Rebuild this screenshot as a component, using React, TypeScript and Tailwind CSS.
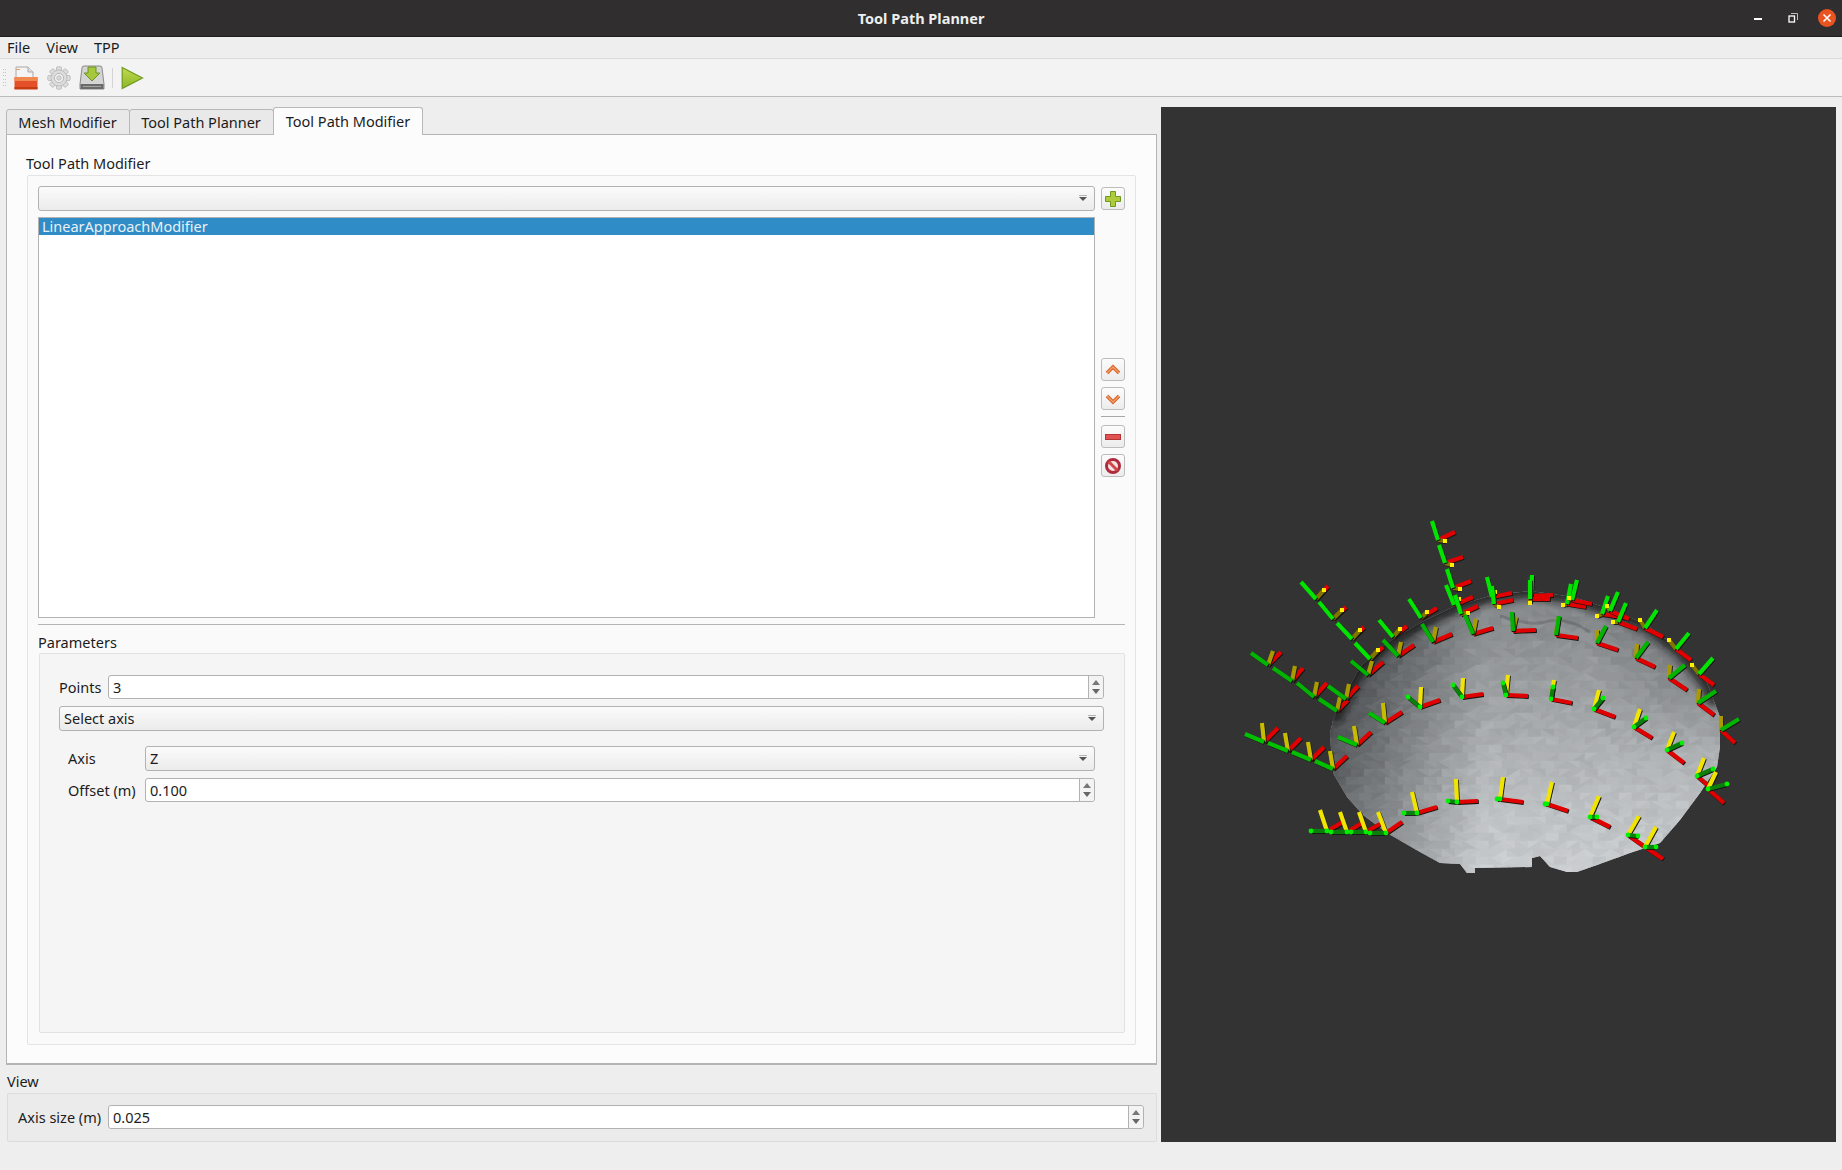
import React from "react";

const uiFont = "font-['Noto_Sans',sans-serif]";

// dome outline in window coordinates
const DOME =
  "1333,720 1345,695 1360,667 1387,643 1420,623 1453,607 1493,595 1530,591 1573,597 1613,610 1647,625 1680,650 1707,683 1720,717 1720,747 1717,767 1700,793 1680,820 1660,843 1630,853 1597,865 1577,872 1567,872 1550,867 1540,856 1532,858 1532,867 1475,868 1475,873 1467,873 1460,864 1440,863 1420,852 1387,833 1363,815 1347,797 1333,773 1331,750 1330,733";

const noise = (x: number, y: number) => {
  const s = Math.sin(x * 12.9898 + y * 78.233) * 43758.5453;
  return s - Math.floor(s) - 0.5;
};

function shade(x: number, y: number) {
  const dx = (x - 1525) / 212;
  const dy = (y - 800) / 212;
  const rim = Math.min(1, Math.sqrt(dx * dx + dy * dy));
  let v = dy < 0 ? 188 + 60 * dy : 188 + 40 * dy;
  if (dx < -0.2) v -= (-dx - 0.2) * 125;
  if (dx > 0.3 && dy < -0.2) v -= (dx - 0.3) * (-dy - 0.2) * 130;
  // latitude stripes of the scan
  v += Math.sin(rim * 70) * 3;
  return v + noise(Math.round(x), Math.round(y)) * 11;
}

function buildFacets() {
  const out: { d: string; c: string }[] = [];
  const w = 13;
  const h = 8;
  for (let j = 0; j < 38; j++) {
    for (let i = 0; i < 33; i++) {
      const x = 1320 + i * w + (j % 2) * 5;
      const y = 585 + j * h;
      const flip = noise(i, j) > 0;
      const tris = flip
        ? [
            [x, y, x + w, y, x, y + h],
            [x + w, y, x + w, y + h, x, y + h],
          ]
        : [
            [x, y, x + w, y, x + w, y + h],
            [x, y, x + w, y + h, x, y + h],
          ];
      for (const t of tris) {
        const v = Math.max(26, Math.min(208, shade((t[0] + t[2] + t[4]) / 3, (t[1] + t[3] + t[5]) / 3)));
        const r = Math.round(v);
        out.push({
          d: `M${t[0]} ${t[1]}L${t[2]} ${t[3]}L${t[4]} ${t[5]}Z`,
          c: `rgb(${r},${r + 3},${r + 5})`,
        });
      }
    }
  }
  return out;
}

// origin, green tip, yellow tip, red tip, tone
type Triad = [number, number, number, number, number, number, number, number, number];
const TRIADS: Triad[] = [
  [1438, 540, 1432, 521, 1445, 541, 1455, 532, 0],
  [1445, 563, 1439, 545, 1452, 565, 1463, 557, 0],
  [1453, 588, 1447, 569, 1460, 589, 1471, 581, 0],
  [1454, 605, 1446, 585, 1459, 599, 1473, 597, 0],
  [1461, 614, 1455, 595, 1468, 613, 1478, 606, 0],
  [1316, 599, 1301, 582, 1324, 590, 1328, 586, 0],
  [1333, 619, 1319, 602, 1342, 610, 1346, 607, 0],
  [1352, 639, 1337, 623, 1360, 630, 1364, 627, 0],
  [1370, 659, 1355, 643, 1378, 650, 1383, 647, 0],
  [1393, 637, 1379, 620, 1400, 629, 1407, 626, 0],
  [1421, 618, 1409, 599, 1427, 612, 1437, 608, 0],
  [1492, 597, 1487, 577, 1495, 592, 1512, 593, 0],
  [1494, 604, 1492, 586, 1499, 607, 1513, 600, 0],
  [1531, 596, 1532, 575, 1530, 603, 1553, 595, 0],
  [1530, 599, 1530, 580, 1530, 603, 1550, 599, 0],
  [1567, 604, 1571, 584, 1563, 605, 1586, 607, 0],
  [1572, 600, 1577, 580, 1569, 598, 1592, 604, 0],
  [1602, 614, 1608, 596, 1597, 616, 1628, 618, 0],
  [1610, 611, 1618, 592, 1607, 606, 1629, 619, 0],
  [1618, 622, 1626, 603, 1613, 622, 1637, 629, 0],
  [1645, 628, 1657, 610, 1640, 620, 1663, 637, 0],
  [1676, 649, 1689, 633, 1669, 640, 1691, 660, 0],
  [1699, 674, 1713, 658, 1692, 665, 1714, 685, 0],
  [1268, 665, 1251, 653, 1273, 651, 1281, 652, 1],
  [1292, 681, 1273, 668, 1295, 666, 1303, 668, 1],
  [1314, 697, 1297, 683, 1317, 682, 1327, 683, 1],
  [1337, 711, 1319, 699, 1340, 697, 1348, 700, 1],
  [1346, 699, 1328, 686, 1349, 684, 1358, 686, 1],
  [1368, 675, 1351, 661, 1372, 661, 1383, 662, 1],
  [1398, 656, 1383, 640, 1401, 642, 1414, 645, 1],
  [1433, 642, 1422, 624, 1436, 627, 1452, 634, 1],
  [1473, 634, 1465, 615, 1476, 619, 1493, 628, 1],
  [1513, 631, 1512, 612, 1516, 617, 1536, 630, 1],
  [1556, 635, 1559, 616, 1558, 618, 1578, 638, 1],
  [1597, 643, 1606, 626, 1597, 630, 1618, 650, 1],
  [1636, 658, 1648, 642, 1637, 644, 1655, 667, 1],
  [1669, 678, 1685, 665, 1670, 665, 1687, 690, 1],
  [1698, 703, 1716, 691, 1699, 689, 1714, 715, 1],
  [1721, 730, 1739, 719, 1721, 716, 1735, 743, 1],
  [1264, 742, 1245, 734, 1262, 723, 1278, 728, 3],
  [1288, 751, 1268, 743, 1285, 733, 1301, 738, 3],
  [1311, 760, 1292, 752, 1308, 742, 1324, 747, 3],
  [1333, 769, 1315, 761, 1330, 751, 1347, 756, 3],
  [1357, 745, 1338, 737, 1354, 726, 1371, 732, 3],
  [1385, 723, 1369, 713, 1383, 703, 1402, 712, 3],
  [1420, 707, 1408, 697, 1421, 687, 1440, 700, 2],
  [1462, 697, 1453, 685, 1463, 678, 1483, 694, 2],
  [1506, 695, 1503, 683, 1508, 675, 1528, 696, 2],
  [1551, 699, 1553, 687, 1554, 680, 1572, 703, 2],
  [1594, 709, 1603, 698, 1599, 690, 1615, 717, 2],
  [1634, 727, 1646, 718, 1640, 709, 1652, 738, 2],
  [1667, 750, 1682, 743, 1674, 732, 1684, 763, 2],
  [1697, 776, 1713, 769, 1704, 758, 1710, 787, 2],
  [1708, 789, 1727, 784, 1716, 772, 1724, 803, 2],
  [1327, 831, 1311, 831, 1320, 810, 1343, 822, 2],
  [1347, 832, 1331, 832, 1340, 812, 1362, 823, 2],
  [1366, 832, 1351, 832, 1359, 812, 1380, 824, 2],
  [1386, 833, 1370, 833, 1378, 812, 1402, 822, 2],
  [1417, 813, 1404, 813, 1412, 792, 1437, 807, 2],
  [1457, 802, 1448, 801, 1456, 779, 1478, 801, 2],
  [1500, 799, 1497, 799, 1503, 777, 1523, 802, 2],
  [1547, 804, 1545, 804, 1552, 782, 1568, 811, 2],
  [1590, 817, 1597, 817, 1599, 796, 1610, 827, 2],
  [1628, 835, 1638, 836, 1639, 816, 1645, 847, 2],
  [1645, 847, 1656, 847, 1656, 827, 1663, 859, 2],
];

const GREEN = ["#00e400", "#02b402", "#0a7f0a", "#00c000"];
const YELLOW = ["#7f7600", "#a89a00", "#f0e400", "#c9bc00"];

function Axis({ x1, y1, x2, y2, color }: { x1: number; y1: number; x2: number; y2: number; color: string }) {
  return (
    <>
      <line x1={x1 + 0.8} y1={y1 + 0.8} x2={x2 + 0.8} y2={y2 + 0.8} stroke="#111" strokeWidth="4.2" />
      <line x1={x1} y1={y1} x2={x2} y2={y2} stroke={color} strokeWidth="4.2" />
    </>
  );
}

function MeshView() {
  const facets = React.useMemo(buildFacets, []);
  return (
    <svg viewBox="1161 107 675 1035" className="block h-full w-full">
      <defs>
        <clipPath id="dome">
          <polygon points={DOME} />
        </clipPath>
        <filter id="soft" x="-10%" y="-30%" width="120%" height="160%">
          <feGaussianBlur stdDeviation="4" />
        </filter>
      </defs>
      <g clipPath="url(#dome)">
        <rect x="1320" y="580" width="440" height="310" fill="#a0a4a6" />
        {facets.map((f, i) => (
          <path key={i} d={f.d} fill={f.c} stroke={f.c} strokeWidth="0.6" />
        ))}
        {/* dark far rim */}
        <polyline
          points="1333,720 1345,695 1360,667 1387,643 1420,623 1453,607 1493,595 1530,591 1573,597 1613,610 1647,625 1680,650 1707,683 1716,705"
          fill="none"
          stroke="#161616"
          strokeWidth="14"
          opacity="0.85"
          filter="url(#soft)"
        />
        <path d="M1500 616 Q1530 626 1545 622 Q1565 616 1590 632" fill="none" stroke="#4a4c4e" strokeWidth="3" opacity="0.3" />
      </g>
      {TRIADS.map((t, i) => (
        <g key={i}>
          <Axis x1={t[0]} y1={t[1]} x2={t[6]} y2={t[7]} color="#e00000" />
          <Axis x1={t[0]} y1={t[1]} x2={t[4]} y2={t[5]} color={YELLOW[t[8]]} />
          <Axis x1={t[0]} y1={t[1]} x2={t[2]} y2={t[3]} color={GREEN[t[8]]} />
          {t[8] === 0 && <rect x={t[4] - 2} y={t[5] - 2} width="4" height="4" fill="#ffee00" />}
          {t[8] === 2 && (
            <>
              <circle cx={t[0]} cy={t[1]} r="2.4" fill="#00f000" />
              <circle cx={t[2]} cy={t[3]} r="2.4" fill="#00f000" />
            </>
          )}
        </g>
      ))}
    </svg>
  );
}

function DownArrow() {
  return (
    <svg width="10" height="7" viewBox="0 0 10 7">
      <rect x="1" y="0" width="8" height="1" fill="#b5b5b5" />
      <polygon points="1,2 9,2 5,6" fill="#555" />
    </svg>
  );
}

function Combo({ text, className }: { text?: string; className?: string }) {
  return (
    <div
      className={`flex h-[25px] items-center justify-between rounded-[3px] border border-[#b2b2b2] bg-gradient-to-b from-[#fbfbfb] to-[#ebebeb] pl-[4px] pr-[6px] ${className ?? ""}`}
    >
      <span className="-mt-[2px]">{text}</span>
      <DownArrow />
    </div>
  );
}

function Spin({ value, className }: { value: string; className?: string }) {
  return (
    <div className={`flex h-[24px] items-stretch rounded-[3px] border border-[#b2b2b2] bg-white ${className ?? ""}`}>
      <span className="flex flex-1 items-center pl-[4px]">{value}</span>
      <div className="flex w-[15px] flex-col items-center justify-center gap-[4px] rounded-r-[3px] border-l border-[#b2b2b2] bg-[#f3f3f3]">
        <svg width="8" height="5" viewBox="0 0 8 5">
          <polygon points="0,5 8,5 4,0" fill="#777" />
        </svg>
        <svg width="8" height="5" viewBox="0 0 8 5">
          <polygon points="0,0 8,0 4,5" fill="#666" />
        </svg>
      </div>
    </div>
  );
}

function IconButton({ children, className }: { children: React.ReactNode; className?: string }) {
  return (
    <div
      className={`flex h-[23px] w-[24px] items-center justify-center rounded-[3px] border border-[#bcbcbc] bg-gradient-to-b from-[#fcfcfc] to-[#ececec] ${className ?? ""}`}
    >
      {children}
    </div>
  );
}

function Chevron({ up }: { up?: boolean }) {
  const d = up ? "M2 11 L8 5 L14 11" : "M2 5 L8 11 L14 5";
  return (
    <svg width="16" height="16" viewBox="0 0 16 16">
      <path d={d} fill="none" stroke="#d8602a" strokeWidth="3.6" />
      <path d={d} fill="none" stroke="#f2a468" strokeWidth="1.4" />
    </svg>
  );
}

function ToolbarIcons() {
  return (
    <div className="flex h-full items-center">
      <div className="ml-[3px] grid h-[18px] w-[4px] grid-cols-2 content-between">
        {Array.from({ length: 12 }).map((_, i) => (
          <span key={i} className="h-[1px] w-[1px] bg-[#c4c4c4]" />
        ))}
      </div>
      {/* open */}
      <svg width="26" height="26" viewBox="0 0 26 26" className="ml-[6px]">
        <path d="M3 2 H15 L20 7 V20 H3 Z" fill="#f4f4f4" stroke="#a8a8a8" />
        <path d="M15 2 V7 H20" fill="#e2e2e2" stroke="#a8a8a8" />
        <rect x="3" y="4" width="4" height="1" fill="#e8a060" />
        <path d="M1.5 12 H24.5 V24 H1.5 Z" fill="#e4502a" />
        <path d="M1.5 12 H24.5 V16 H1.5 Z" fill="#f08a50" />
        <path d="M1.5 22 H24.5 V24.5 H1.5 Z" fill="#c83c14" />
      </svg>
      {/* settings, disabled look */}
      <svg width="24" height="24" viewBox="0 0 24 24" className="ml-[8px]">
        <g fill="#dcdcdc" stroke="#b8b8b8" strokeWidth="0.8">
          {[0, 45, 90, 135, 180, 225, 270, 315].map((a) => (
            <rect key={a} x="9.5" y="0.8" width="5" height="6" rx="1" transform={`rotate(${a} 12 12)`} />
          ))}
          <circle cx="12" cy="12" r="8" />
        </g>
        <circle cx="12" cy="12" r="4.6" fill="#f2f2f2" stroke="#b8b8b8" />
        <circle cx="12" cy="12" r="2.2" fill="#dadada" stroke="#bebebe" />
      </svg>
      {/* save */}
      <svg width="26" height="26" viewBox="0 0 26 26" className="ml-[8px]">
        <path d="M3 3 Q3 1 5 1 H21 Q23 1 23 3 L25 19 V24 H1 V19 Z" fill="#d4d4d4" stroke="#8a8a8a" />
        <rect x="1.5" y="19" width="23" height="5" fill="#6a6a6a" />
        <rect x="4" y="21" width="18" height="1" fill="#a4a4a4" />
        <path d="M9 2 H17 V8 H21 L13 16 L5 8 H9 Z" fill="#a5c83c" stroke="#6c9422" />
      </svg>
      <div className="ml-[7px] h-[20px] w-[1px] bg-[#d4d4d4]" />
      <svg width="23" height="24" viewBox="0 0 23 24" className="ml-[8px]">
        <defs>
          <linearGradient id="play" x1="0" y1="0" x2="0" y2="1">
            <stop offset="0" stopColor="#c3da4e" />
            <stop offset="1" stopColor="#8cb528" />
          </linearGradient>
        </defs>
        <polygon points="1.2,1.5 21.5,12 1.2,22.5" fill="url(#play)" stroke="#6f9a1e" strokeWidth="1.2" />
      </svg>
    </div>
  );
}

export default function App() {
  return (
    <div className={`flex h-[1170px] w-[1842px] flex-col overflow-hidden bg-[#eeeeee] text-[14.5px] leading-5 text-[#1c1c1c] ${uiFont}`}>
      {/* Title bar */}
      <div className="relative flex h-[37px] shrink-0 items-center justify-center border-b border-[#1e1e1e] bg-[#302e2e]">
        <span className="text-[14.5px] font-bold text-[#eeeeee]">Tool Path Planner</span>
        <div className="absolute right-[6px] top-[9px] flex items-center">
          <span className="mr-[26px] mt-[2px] h-[1px] w-[8px] border-t-2 border-white" />
          <svg width="10" height="10" viewBox="0 0 10 10" className="mr-[20px]">
            <path d="M3 0.5 H9.5 V7" fill="none" stroke="#bbb" />
            <rect x="1" y="3" width="5.5" height="6" fill="none" stroke="#fff" strokeWidth="1.3" />
          </svg>
          <div className="flex h-[18px] w-[18px] items-center justify-center rounded-full bg-[#e95420]">
            <svg width="10" height="10" viewBox="0 0 10 10">
              <path d="M1.5 1.5 L8.5 8.5 M8.5 1.5 L1.5 8.5" stroke="#fff" strokeWidth="1.6" />
            </svg>
          </div>
        </div>
      </div>

      {/* Menu */}
      <div className="flex h-[22px] shrink-0 items-center gap-[16px] border-b border-[#d9d9d9] pb-[2px] pl-[7px]">
        <span>File</span>
        <span>View</span>
        <span>TPP</span>
      </div>

      {/* Toolbar */}
      <div className="h-[38px] shrink-0 border-b border-[#bcbcbc] bg-[#f3f3f3]">
        <ToolbarIcons />
      </div>

      {/* Body */}
      <div className="flex gap-[4px] pl-[6px] pt-[10px]">
        <div className="w-[1151px]">
          {/* Tabs */}
          <div className="relative z-10 flex h-[28px] items-end">
            <div className="flex h-[26px] w-[124px] items-center justify-center rounded-t-[3px] border border-[#b8b8b8] bg-[#e9e9e9] pr-[1px]">
              Mesh Modifier
            </div>
            <div className="-ml-px flex h-[26px] w-[145px] items-center justify-center rounded-t-[3px] border border-[#b8b8b8] bg-[#e9e9e9] pr-[1px]">
              Tool Path Planner
            </div>
            <div className="-ml-px flex h-[28px] w-[150px] items-center justify-center rounded-t-[3px] border border-b-0 border-[#b8b8b8] bg-[#fcfcfc] pb-[2px]">
              Tool Path Modifier
            </div>
          </div>

          {/* Pane */}
          <div className="-mt-px h-[931px] border border-b-2 border-[#b4b4b4] bg-[#fcfcfc] px-[20px] pt-[18px]">
            <div className="-ml-px h-[22px]">Tool Path Modifier</div>
            <div className="h-[870px] rounded-[2px] border border-[#e4e4e4] bg-[#fafafa] px-[10px] pt-[10px]">
              <div className="flex gap-[6px]">
                <div className="w-[1057px]">
                  <Combo />
                  <div className="mt-[6px] h-[401px] border border-[#b2b2b2] bg-white">
                    <div className="flex h-[17px] items-center bg-[#308cc6] pb-[2px] pl-[3px] text-[#e8f0f6]">LinearApproachModifier</div>
                  </div>
                </div>
                <div className="flex w-[24px] flex-col pt-[1px]">
                  <IconButton>
                    <svg width="16" height="16" viewBox="0 0 16 16">
                      <path d="M5.5 0.5 H10.5 V5.5 H15.5 V10.5 H10.5 V15.5 H5.5 V10.5 H0.5 V5.5 H5.5 Z" fill="#aecb3c" stroke="#6f9a22" />
                    </svg>
                  </IconButton>
                  <IconButton className="mt-[148px]">
                    <Chevron up />
                  </IconButton>
                  <IconButton className="mt-[6px]">
                    <Chevron />
                  </IconButton>
                  <div className="mt-[6px] h-[1px] bg-[#a8a8a8]" />
                  <IconButton className="mt-[8px]">
                    <svg width="16" height="6" viewBox="0 0 16 6">
                      <rect x="0.5" y="0.5" width="15" height="5" fill="#e05252" stroke="#b83434" />
                    </svg>
                  </IconButton>
                  <IconButton className="mt-[6px]">
                    <svg width="18" height="18" viewBox="0 0 18 18">
                      <circle cx="9" cy="9" r="6.5" fill="#f4e4e4" stroke="#b02a3c" strokeWidth="3" />
                      <path d="M4.5 4.5 L13.5 13.5" stroke="#d04848" strokeWidth="3" />
                    </svg>
                  </IconButton>
                </div>
              </div>

              <div className="mt-[6px] h-[1px] bg-[#b4b4b4]" />

              <div className="mt-[7px] h-[21px]">Parameters</div>
              <div className="ml-px h-[380px] rounded-[2px] border border-[#e2e2e2] bg-[#f5f5f5] pl-[19px] pr-[20px] pt-[21px]">
                <div className="flex items-center">
                  <span className="w-[49px]">Points</span>
                  <Spin value="3" className="flex-1" />
                </div>
                <Combo text="Select axis" className="mt-[7px]" />
                <div className="px-[9px] pt-[15px]">
                  <div className="flex items-center">
                    <span className="-mt-[2px] w-[77px]">Axis</span>
                    <Combo text="Z" className="flex-1" />
                  </div>
                  <div className="mt-[7px] flex items-center">
                    <span className="w-[77px]">Offset (m)</span>
                    <Spin value="0.100" className="flex-1" />
                  </div>
                </div>
              </div>
            </div>
          </div>

          {/* View */}
          <div className="mt-[6px] h-[22px] pl-px">View</div>
          <div className="ml-px flex h-[49px] items-center rounded-[2px] border border-[#dcdcdc] bg-[#ebebeb] pb-[1px] pl-[10px] pr-[12px]">
            <span className="w-[90px]">Axis size (m)</span>
            <Spin value="0.025" className="flex-1" />
          </div>
        </div>

        <div className="h-[1035px] w-[675px] bg-[#333333]">
          <MeshView />
        </div>
      </div>
    </div>
  );
}
